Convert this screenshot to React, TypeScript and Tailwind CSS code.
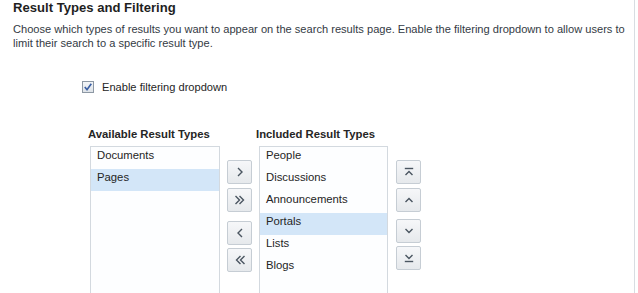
import React from 'react';

const available = ['Documents', 'Pages'];
const included = ['People', 'Discussions', 'Announcements', 'Portals', 'Lists', 'Blogs'];

function Chevron({ kind }: { kind: string }) {
    // small stroked glyphs drawn for the shuttle buttons
    const common = { fill: 'none', stroke: '#4a5560', strokeWidth: 1.4, strokeLinecap: 'square' as const };
    switch (kind) {
        case 'right':
            return <svg width="10" height="10" viewBox="0 0 10 10"><path d="M3.5 1.5 L7 5 L3.5 8.5" {...common} /></svg>;
        case 'left':
            return <svg width="10" height="10" viewBox="0 0 10 10"><path d="M6.5 1.5 L3 5 L6.5 8.5" {...common} /></svg>;
        case 'rightAll':
            return <svg width="12" height="10" viewBox="0 0 12 10"><path d="M2 1.5 L5.5 5 L2 8.5 M6 1.5 L9.5 5 L6 8.5" {...common} /></svg>;
        case 'leftAll':
            return <svg width="12" height="10" viewBox="0 0 12 10"><path d="M6 1.5 L2.5 5 L6 8.5 M10 1.5 L6.5 5 L10 8.5" {...common} /></svg>;
        case 'up':
            return <svg width="10" height="10" viewBox="0 0 10 10"><path d="M2 6.5 L5 3.5 L8 6.5" {...common} /></svg>;
        case 'down':
            return <svg width="10" height="10" viewBox="0 0 10 10"><path d="M2 3.5 L5 6.5 L8 3.5" {...common} /></svg>;
        case 'top':
            return <svg width="10" height="10" viewBox="0 0 10 10"><path d="M1.5 1.5 L8.5 1.5" {...common} /><path d="M2 7.5 L5 4.5 L8 7.5" {...common} /></svg>;
        default:
            return <svg width="10" height="10" viewBox="0 0 10 10"><path d="M2 2.5 L5 5.5 L8 2.5" {...common} /><path d="M1.5 8.5 L8.5 8.5" {...common} /></svg>;
    }
}

function ShuttleButton({ kind, className = '' }: { kind: string; className?: string }) {
    return (
        <button
            className={`w-[25px] h-[24px] flex items-center justify-center rounded-[2px] border border-[#c6cdd4] bg-gradient-to-b from-[#f6f7f9] to-[#e6e9ec] ${className}`}
        >
            <Chevron kind={kind} />
        </button>
    );
}

function ListBox({ items, selected, width }: { items: string[]; selected: string; width: string }) {
    return (
        <div className={`${width} h-[160px] mt-[5px] border border-[#d3d9df] bg-[#fdfeff]`}>
            {items.map((item) => (
                <div
                    key={item}
                    className={`h-[22px] leading-[17px] pl-[6px] text-[11.3px] text-[#252525] ${item === selected ? 'bg-[#d3e6f8]' : ''}`}
                >
                    {item}
                </div>
            ))}
        </div>
    );
}

export default function App() {
    return (
        <div className="w-[638px] h-[293px] overflow-hidden bg-white font-['Liberation_Sans',Arial,sans-serif]">
            <div className="w-[635px] h-[293px] border-r border-[#d8dde2] pl-[13px]">
                <h2 className="text-[13.1px] leading-[16px] font-bold text-[#1f1f1f]">Result Types and Filtering</h2>
                <p className="mt-[6px] w-[620px] text-[11.1px] leading-[14px] text-[#333a44]">
                    Choose which types of results you want to appear on the search results page. Enable the filtering dropdown to allow users to limit their search to a specific result type.
                </p>

                <label className="mt-[30px] ml-[69px] flex items-center gap-[8px] text-[11.1px] text-[#252525]">
                    <svg width="12" height="12" viewBox="0 0 12 12">
                        <defs>
                            <linearGradient id="cb" x1="0" y1="0" x2="0" y2="1">
                                <stop offset="0" stopColor="#f4f6f8" />
                                <stop offset="1" stopColor="#dde2e7" />
                            </linearGradient>
                        </defs>
                        <rect x="0.5" y="0.5" width="11" height="11" fill="url(#cb)" stroke="#8d98a4" />
                        <path d="M2.8 6 L5 8.7 L9.3 2.8" fill="none" stroke="#3b5fa3" strokeWidth="1.7" />
                    </svg>
                    <span className="leading-[14px]">Enable filtering dropdown</span>
                </label>

                <div className="mt-[33px] ml-[75px] flex items-start">
                    <div className="w-[132px] flex flex-col">
                        <div className="text-[11.3px] leading-[14px] font-bold text-[#252525]">Available Result Types</div>
                        <div className="ml-[2px]">
                            <ListBox items={available} selected="Pages" width="w-[130px]" />
                        </div>
                    </div>

                    <div className="ml-[7px] pt-[33px] flex flex-col">
                        <ShuttleButton kind="right" />
                        <ShuttleButton kind="rightAll" className="mt-[4px]" />
                        <ShuttleButton kind="left" className="mt-[9px]" />
                        <ShuttleButton kind="leftAll" className="mt-[3px]" />
                    </div>

                    <div className="ml-[4px] w-[132px] flex flex-col">
                        <div className="text-[11.3px] leading-[14px] font-bold text-[#252525]">Included Result Types</div>
                        <div className="ml-[3px]">
                            <ListBox items={included} selected="Portals" width="w-[129px]" />
                        </div>
                    </div>

                    <div className="ml-[8px] pt-[33px] flex flex-col">
                        <ShuttleButton kind="top" />
                        <ShuttleButton kind="up" className="mt-[4px]" />
                        <ShuttleButton kind="down" className="mt-[7px]" />
                        <ShuttleButton kind="bottom" className="mt-[3px]" />
                    </div>
                </div>
            </div>
        </div>
    );
}
